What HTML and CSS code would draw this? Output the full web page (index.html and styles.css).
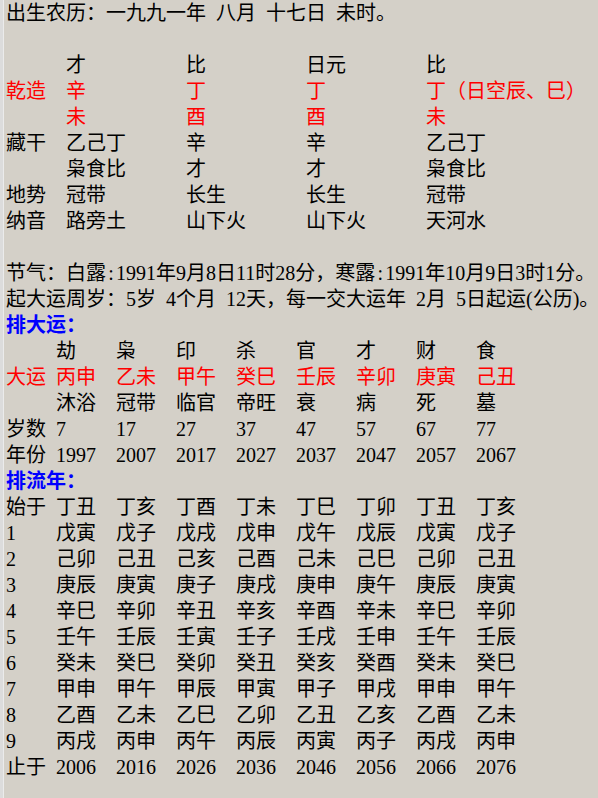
FILE: index.html
```html
<!DOCTYPE html>
<html lang="zh-CN">
<head>
<meta charset="utf-8">
<title>八字排盘</title>
<link rel="stylesheet" href="styles.css">
</head>
<body>
<div class="page">
  <p class="line">出生农历：一九九一年&ensp;八月&ensp;十七日&ensp;未时。</p>
  <div class="blank"></div>

  <div class="pillars">
    <span></span><span>才</span><span>比</span><span>日元</span><span>比</span>
    <span class="red">乾造</span><span class="red">辛</span><span class="red">丁</span><span class="red">丁</span><span class="red">丁（日空辰、巳）</span>
    <span></span><span class="red">未</span><span class="red">酉</span><span class="red">酉</span><span class="red">未</span>
    <span>藏干</span><span>乙己丁</span><span>辛</span><span>辛</span><span>乙己丁</span>
    <span></span><span>枭食比</span><span>才</span><span>才</span><span>枭食比</span>
    <span>地势</span><span>冠带</span><span>长生</span><span>长生</span><span>冠带</span>
    <span>纳音</span><span>路旁土</span><span>山下火</span><span>山下火</span><span>天河水</span>
  </div>
  <div class="blank"></div>

  <p class="line">节气：白露<span class="hw">:</span>1991年9月8日11时28分，寒露<span class="hw">:</span>1991年10月9日3时1分。</p>
  <p class="line">起大运周岁：5岁&ensp;4个月&ensp;12天，每一交大运年&ensp;2月&ensp;5日起运(公历)。</p>
  <p class="line heading">排大运：</p>

  <div class="grid9">
    <span></span><span>劫</span><span>枭</span><span>印</span><span>杀</span><span>官</span><span>才</span><span>财</span><span>食</span>
    <span class="red">大运</span><span class="red">丙申</span><span class="red">乙未</span><span class="red">甲午</span><span class="red">癸巳</span><span class="red">壬辰</span><span class="red">辛卯</span><span class="red">庚寅</span><span class="red">己丑</span>
    <span></span><span>沐浴</span><span>冠带</span><span>临官</span><span>帝旺</span><span>衰</span><span>病</span><span>死</span><span>墓</span>
    <span>岁数</span><span>7</span><span>17</span><span>27</span><span>37</span><span>47</span><span>57</span><span>67</span><span>77</span>
    <span>年份</span><span>1997</span><span>2007</span><span>2017</span><span>2027</span><span>2037</span><span>2047</span><span>2057</span><span>2067</span>
  </div>

  <p class="line heading">排流年：</p>

  <div class="grid9">
    <span>始于</span><span>丁丑</span><span>丁亥</span><span>丁酉</span><span>丁未</span><span>丁巳</span><span>丁卯</span><span>丁丑</span><span>丁亥</span>
    <span>1</span><span>戊寅</span><span>戊子</span><span>戊戌</span><span>戊申</span><span>戊午</span><span>戊辰</span><span>戊寅</span><span>戊子</span>
    <span>2</span><span>己卯</span><span>己丑</span><span>己亥</span><span>己酉</span><span>己未</span><span>己巳</span><span>己卯</span><span>己丑</span>
    <span>3</span><span>庚辰</span><span>庚寅</span><span>庚子</span><span>庚戌</span><span>庚申</span><span>庚午</span><span>庚辰</span><span>庚寅</span>
    <span>4</span><span>辛巳</span><span>辛卯</span><span>辛丑</span><span>辛亥</span><span>辛酉</span><span>辛未</span><span>辛巳</span><span>辛卯</span>
    <span>5</span><span>壬午</span><span>壬辰</span><span>壬寅</span><span>壬子</span><span>壬戌</span><span>壬申</span><span>壬午</span><span>壬辰</span>
    <span>6</span><span>癸未</span><span>癸巳</span><span>癸卯</span><span>癸丑</span><span>癸亥</span><span>癸酉</span><span>癸未</span><span>癸巳</span>
    <span>7</span><span>甲申</span><span>甲午</span><span>甲辰</span><span>甲寅</span><span>甲子</span><span>甲戌</span><span>甲申</span><span>甲午</span>
    <span>8</span><span>乙酉</span><span>乙未</span><span>乙巳</span><span>乙卯</span><span>乙丑</span><span>乙亥</span><span>乙酉</span><span>乙未</span>
    <span>9</span><span>丙戌</span><span>丙申</span><span>丙午</span><span>丙辰</span><span>丙寅</span><span>丙子</span><span>丙戌</span><span>丙申</span>
    <span>止于</span><span>2006</span><span>2016</span><span>2026</span><span>2036</span><span>2046</span><span>2056</span><span>2066</span><span>2076</span>
  </div>
</div>
</body>
</html>
```

FILE: styles.css
```css
html, body {
  margin: 0;
  padding: 0;
  background: #d4d0c8;
  height: 100%;
}

body {
  font-family: "Liberation Serif", "Noto Sans CJK SC", serif;
  font-size: 20px;
  line-height: 26px;
  color: #000;
}

.page {
  min-height: 100%;
  box-sizing: border-box;
  border-left: 3px solid #dcdcdc;
  box-shadow: inset 1px 0 0 #ebebeb;
  padding-left: 3px;
}

.line {
  margin: 0;
  height: 26px;
  white-space: nowrap;
}

.hw {
  display: inline-block;
  width: 10px;
  text-align: center;
}

.blank {
  height: 26px;
}

.heading {
  color: #0000ff;
  font-weight: bold;
}

.red {
  color: #ff0000;
}

.pillars {
  display: grid;
  grid-template-columns: 60px 120px 120px 120px auto;
  grid-auto-rows: 26px;
  white-space: nowrap;
}

.grid9 {
  display: grid;
  grid-template-columns: 50px repeat(8, 60px);
  grid-auto-rows: 26px;
  white-space: nowrap;
}
```
